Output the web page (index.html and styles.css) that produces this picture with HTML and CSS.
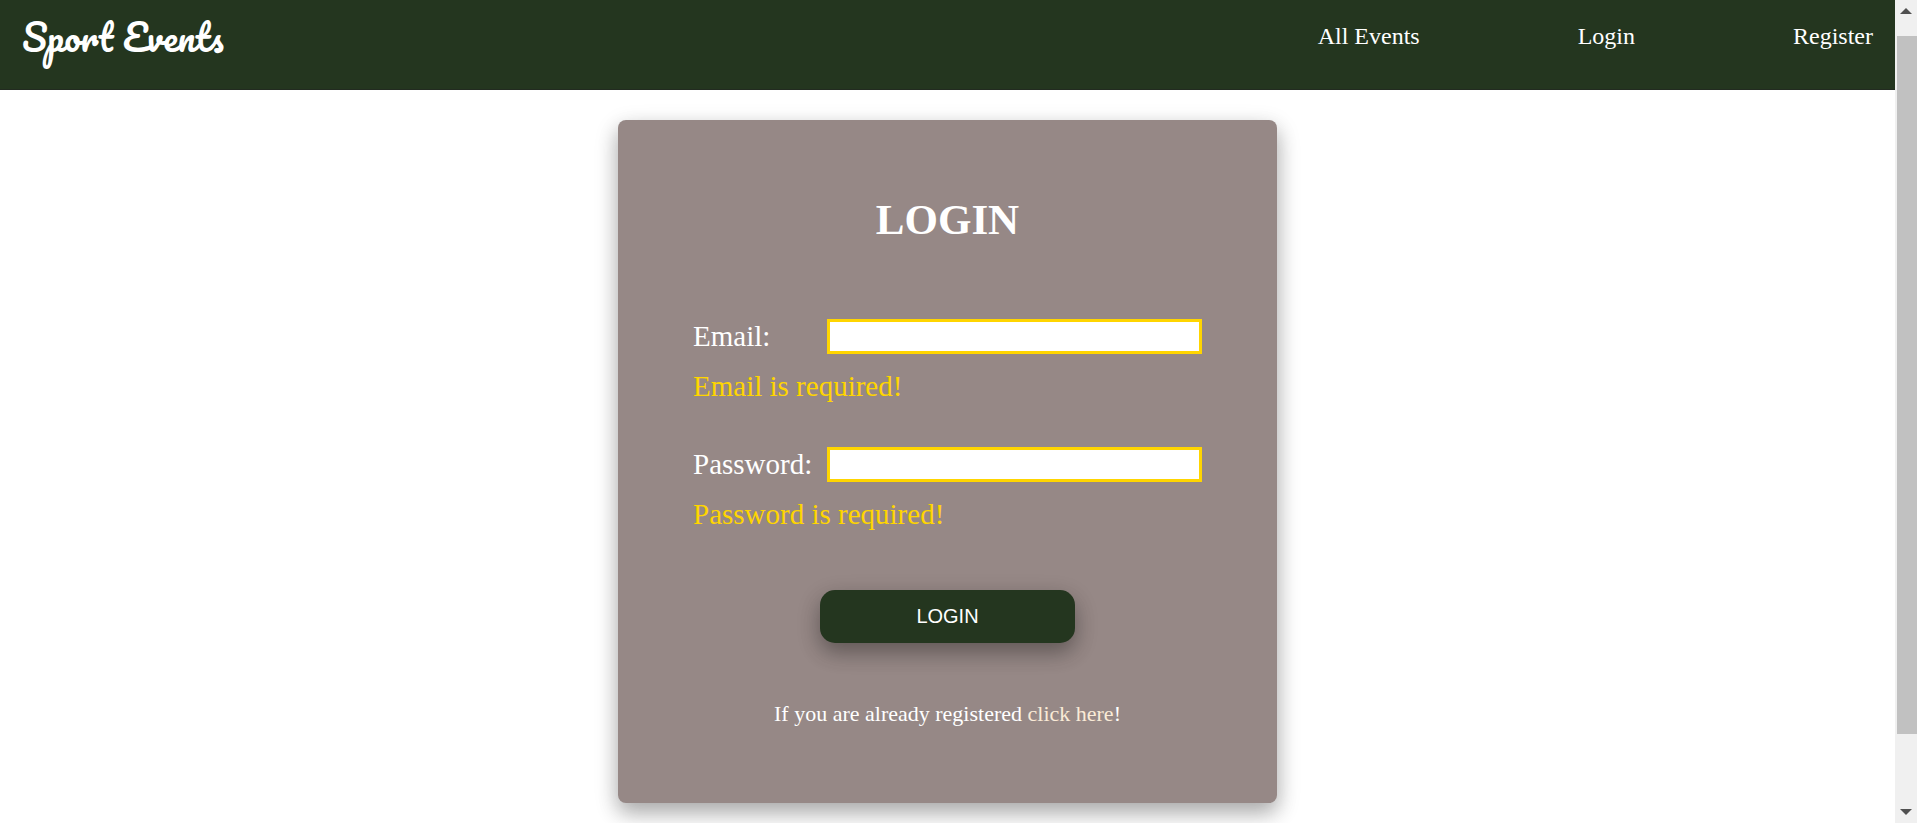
FILE: index.html
```html
<!DOCTYPE html>
<html lang="en">
<head>
  <meta charset="utf-8">
  <meta name="viewport" content="width=device-width, initial-scale=1">
  <title>Sport Events</title>
  <link rel="stylesheet" href="styles.css">
</head>
<body>
  <div class="viewport">
    <div class="page">
      <header class="site-header">
        <a class="logo" href="#">Sport Events</a>
        <nav class="site-nav">
          <a href="#">All Events</a>
          <a href="#">Login</a>
          <a href="#">Register</a>
        </nav>
      </header>
      <main class="content">
        <form class="card" novalidate>
          <h1 class="title">LOGIN</h1>
          <div class="field">
            <label for="email">Email:</label>
            <input id="email" type="email" aria-describedby="email-error">
            <p class="error" id="email-error">Email is required!</p>
          </div>
          <div class="field">
            <label for="password">Password:</label>
            <input id="password" type="password" aria-describedby="password-error">
            <p class="error" id="password-error">Password is required!</p>
          </div>
          <button class="submit" type="submit">LOGIN</button>
          <p class="hint">If you are already registered <a href="#">click here</a>!</p>
        </form>
      </main>
    </div>
    <div class="scrollbar" aria-hidden="true">
      <svg class="arrow" viewBox="0 0 12 6"><path d="M6 0 12 6H0z"/></svg>
      <div class="track"><div class="thumb"></div></div>
      <svg class="arrow" viewBox="0 0 12 6"><path d="M0 0H12L6 6z"/></svg>
    </div>
  </div>
</body>
</html>
```
FILE: styles.css
```css
* {
  box-sizing: border-box;
}

body {
  margin: 0;
  background: #fff;
  color: #fff;
  font-family: "Liberation Serif", "Times New Roman", serif;
}

a {
  color: inherit;
  text-decoration: none;
}

.viewport {
  display: flex;
  height: 100vh;
  overflow: hidden;
}

.page {
  flex: 1;
  min-width: 0;
  overflow: hidden;
}

.site-header {
  display: flex;
  justify-content: space-between;
  align-items: flex-start;
  height: 90px;
  padding: 12px 22px;
  background: #24361f;
  border-bottom: 1px solid #222b20;
}

.logo {
  font: 36px/50px Pacifico, cursive;
}

.site-nav {
  display: flex;
  gap: 158px;
  padding-top: 10px;
  font-size: 24px;
  line-height: 28px;
}

.content {
  display: flex;
  justify-content: center;
  padding: 30px 0;
}

.card {
  display: flex;
  flex-direction: column;
  width: 100%;
  max-width: 659px;
  padding: 75px;
  background: #968886;
  border-radius: 8px;
  box-shadow: 0 10px 20px rgba(0, 0, 0, 0.2), 0 8px 25px rgba(0, 0, 0, 0.19);
}

.title {
  margin: 0 0 74px;
  font-size: 43px;
  line-height: 50px;
  text-align: center;
}

.field {
  display: grid;
  grid-template-columns: 134px 1fr;
  align-items: center;
  row-gap: 15px;
  margin-bottom: 43px;
  font-size: 29px;
  line-height: 35px;
}

.field input {
  width: 100%;
  height: 35px;
  padding: 0 8px;
  border: 3px solid #ffd500;
  border-radius: 0;
  outline: none;
  background: #fff;
  font-size: 20px;
}

.error {
  grid-column: 1 / -1;
  margin: 0;
  color: #ffd500;
}

.submit {
  align-self: center;
  width: 50%;
  min-width: 255px;
  height: 53px;
  margin: 15px 0 56px;
  border: 0;
  border-radius: 15px;
  background: #24361f;
  box-shadow: 0 10px 20px rgba(0, 0, 0, 0.2), 0 8px 25px rgba(0, 0, 0, 0.19);
  color: #fff;
  font: 20px "Liberation Sans", Arial, sans-serif;
}

.hint {
  margin: 0;
  font-size: 22px;
  line-height: 29px;
  text-align: center;
}

.hint a {
  color: #faebd7;
}

.scrollbar {
  display: flex;
  flex-direction: column;
  align-items: center;
  width: 22px;
  padding: 8px 0;
  background: #f0f0f0;
}

.arrow {
  width: 12px;
  height: 6px;
  fill: #505050;
}

.track {
  flex: 1;
  align-self: stretch;
  margin: 22px 0;
  padding-left: 2px;
}

.thumb {
  height: 93%;
  background: #c1c1c1;
}
```
